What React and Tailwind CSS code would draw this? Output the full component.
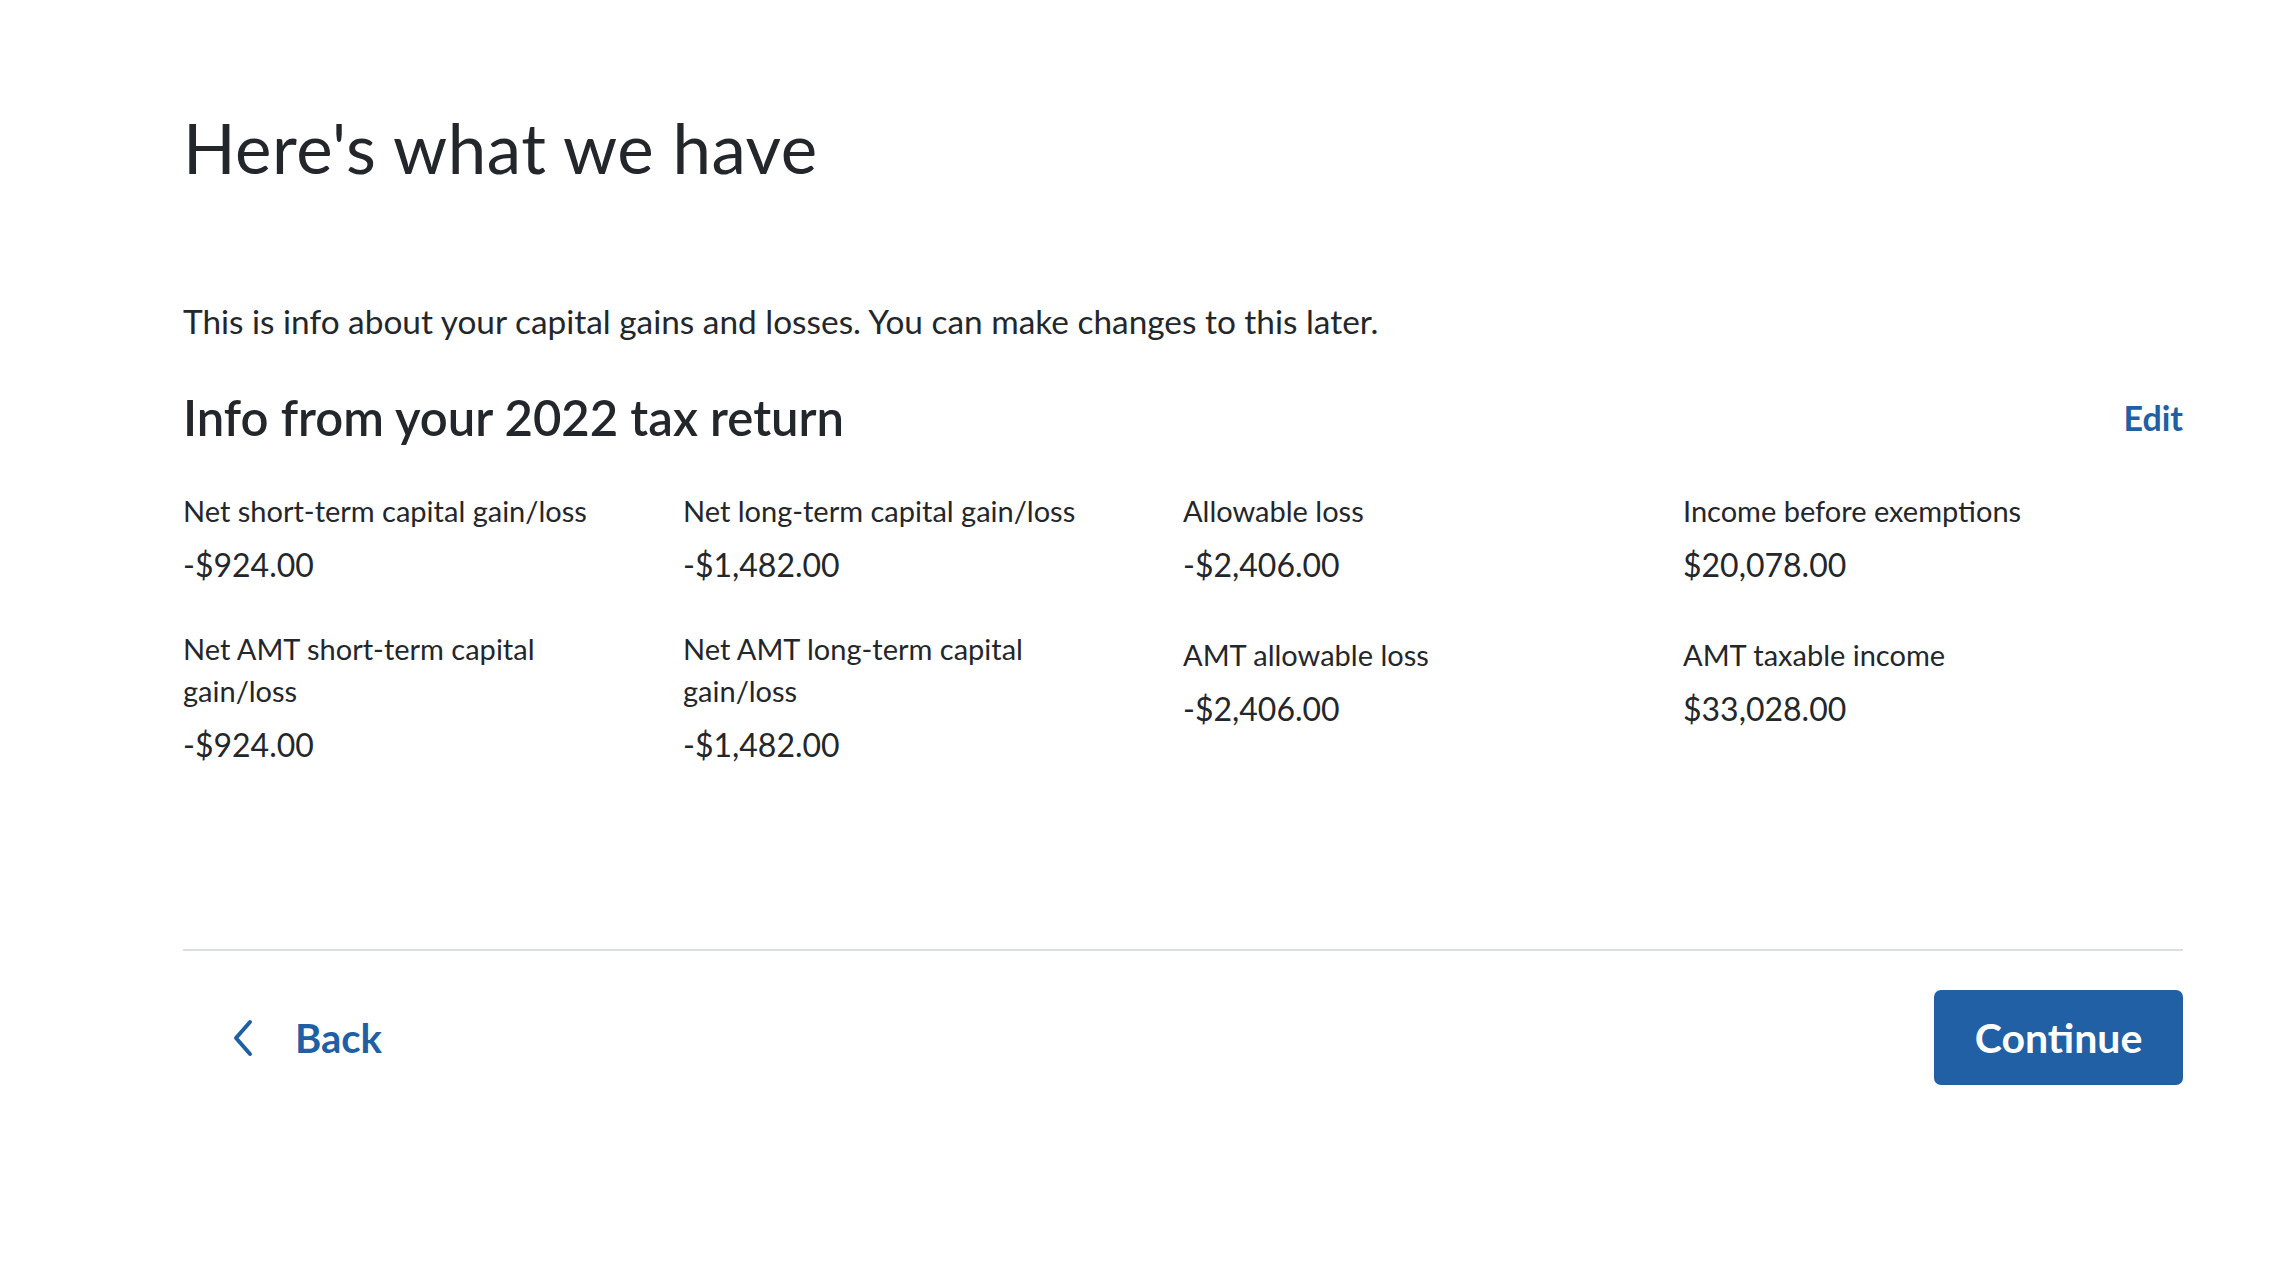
const items = [
  { label: "Net short-term capital gain/loss", value: "-$924.00" },
  { label: "Net long-term capital gain/loss", value: "-$1,482.00" },
  { label: "Allowable loss", value: "-$2,406.00" },
  { label: "Income before exemptions", value: "$20,078.00" },
  { label: "Net AMT short-term capital gain/loss", value: "-$924.00" },
  { label: "Net AMT long-term capital gain/loss", value: "-$1,482.00" },
  { label: "AMT allowable loss", value: "-$2,406.00", nudge: true },
  { label: "AMT taxable income", value: "$33,028.00", nudge: true },
];

function ChevronLeft() {
  return (
    <svg width="24" height="38" viewBox="0 0 24 38" fill="none">
      <polyline
        points="19,3 5,19 19,35"
        stroke="currentColor"
        strokeWidth="4"
        strokeLinecap="round"
        strokeLinejoin="round"
      />
    </svg>
  );
}

export default function App() {
  return (
    <div className="min-h-screen bg-white font-['Lato',_'Open_Sans',_sans-serif] text-[#23272b]">
      <div className="ml-[183px] w-[2000px] pt-[104px]">
        <h1 className="text-[69px] font-normal leading-[88px] tracking-[0.5px]">
          Here's what we have
        </h1>

        <p className="mt-[107px] text-[33.4px] leading-[44px]">
          This is info about your capital gains and losses. You can make changes to this later.
        </p>

        <div className="mt-[48px] flex items-center justify-between">
          <h2 className="text-[49px] font-semibold leading-[52px]">
            Info from your 2022 tax return
          </h2>
          <button className="text-[34px] font-bold text-[#1f5fa5]">Edit</button>
        </div>

        <div className="mt-[47px] grid grid-cols-4 gap-y-[42px]">
          {items.map((item) => (
            <div
              key={item.label}
              className={item.nudge ? "pt-[6px] pr-[80px]" : "pr-[80px]"}
            >
              <div className="text-[29px] leading-[42px]">{item.label}</div>
              <div className="mt-[12px] text-[32px] leading-[42px]">
                {item.value}
              </div>
            </div>
          ))}
        </div>

        <div className="mt-[183px] h-[2px] bg-[#d8dfe3]" />

        <div className="mt-[39px] flex items-center justify-between">
          <button className="flex items-center gap-[40px] pl-[48px] text-[#1f5fa5]">
            <ChevronLeft />
            <span className="text-[40px] font-bold">Back</span>
          </button>
          <button className="h-[95px] w-[249px] rounded-[7px] bg-[#2160a4] text-[41px] font-bold text-white">
            Continue
          </button>
        </div>
      </div>
    </div>
  );
}
